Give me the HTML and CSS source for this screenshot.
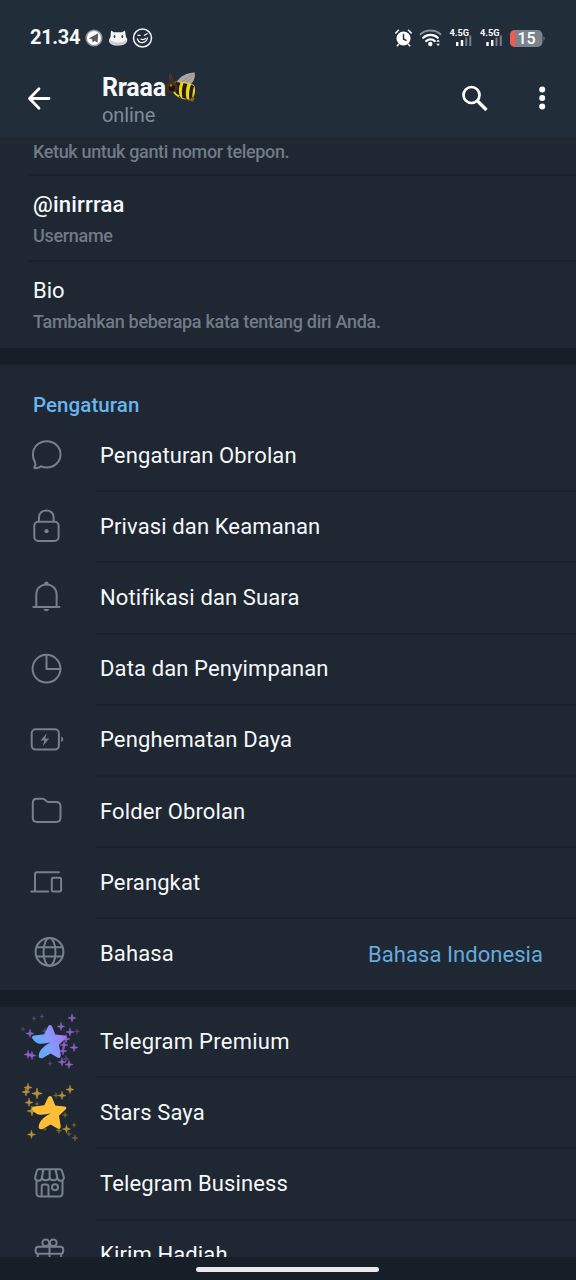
FILE: index.html
```html
<!DOCTYPE html>
<html lang="id">
<head>
<meta charset="utf-8">
<title>Pengaturan</title>
<link rel="stylesheet" href="styles.css">
</head>
<body>
<div class="screen">
  <header class="header">
    <div class="status">
      <span class="clock">21.34</span>
      <svg class="notif" width="70" height="22" viewBox="0 0 70 22">
        <circle cx="9" cy="11" r="8.6" fill="#8e959d"/><circle cx="9" cy="11" r="7" fill="#fff"/>
        <path d="M3.600 11.400 13.200 6.200l-.6 9.400-3.200-1.800-1.700 2-.6-3.600z" fill="#555c63"/>
        <path d="M26 3.500 29 5.200h8L40 3.500l1 6.500c3 3 1 8.600-8 8.600s-10.500-4.600-7.500-8.600z" fill="#f3f4f5"/>
        <path d="M24.600 12.500c-1 7.500 17.800 7.500 17.200 0-3 4-14 4-17.200 0z" fill="#c9cdd1"/>
        <ellipse cx="29.500" cy="9.500" rx=".9" ry="1.500" fill="#303943"/><ellipse cx="37.300" cy="9.500" rx=".9" ry="1.500" fill="#303943"/>
        <g fill="none" stroke="#f1f3f5" stroke-width="1.500" stroke-linecap="round"><circle cx="57.500" cy="11" r="9"/><path d="M52.500 12c1.200 5.200 8.500 4.600 10-1M53 8.300h2M59.500 8.300l2.700-1.600M56 12.200c1.600.7 3.200.3 4.500-.7" stroke-width="1.300"/></g>
      </svg>
      <svg class="indicators" width="156" height="24" viewBox="0 0 156 24">
        <g fill="none" stroke="#fff" stroke-linecap="round">
          <circle cx="13.500" cy="12.500" r="7" fill="#fff" stroke="none"/>
          <path d="M13.500 8.500v4.500l2.600 1.300" stroke="#222d3a" stroke-width="1.500"/>
          <path d="M5.800 7 8.500 4.300M18.500 4.300 21.200 7M8.500 18.500 7.300 19.700M18.500 18.500l1.200 1.200" stroke-width="1.600"/>
          <path d="M30.500 8.200c5.500-5 14.500-5 20 0" stroke="#89919a" stroke-width="2"/>
          <path d="M33.200 11.800c4-3.900 10.600-3.900 14.600 0M36.200 15.100c2.400-2.300 6.200-2.300 8.600 0" stroke-width="2.200"/>
        </g>
        <circle cx="40.300" cy="18" r="2.200" fill="#fff"/><path d="m46.300 15.800 1.800-2.300 1.800 2.300zm0 1.900h3.600l-1.800 2.300z" fill="#fff"/>
        <g class="network"><text x="59.500" y="10" textLength="19.500" lengthAdjust="spacingAndGlyphs">4.5G</text><text x="90" y="10" textLength="19.500" lengthAdjust="spacingAndGlyphs">4.5G</text></g>
        <g fill="#fff"><path d="M66 16h2.400v4H66zM70.800 14h2.400v6h-2.400zM96.300 16h2.400v4h-2.400zM101 14h2.400v6H101z"/></g>
        <path d="M75.300 11.500h2V20h-2zM79.300 9.500h2V20h-2zM105.500 11.500h2V20h-2zM109.800 9.500h2V20h-2z" fill="#77808a"/>
        <rect x="120" y="4" width="32.500" height="17" rx="5" fill="#7b838c"/>
        <path d="M125.500 4H125a5 5 0 0 0-5 5v7a5 5 0 0 0 5 5h.5z" fill="#ed5b55"/>
        <path d="M153.500 10q2.300 2.500 0 5z" fill="#7b838c"/>
        <text class="charge" x="136.500" y="18.200" text-anchor="middle">15</text>
      </svg>
    </div>
    <div class="toolbar">
      <svg class="back" width="24" height="26" viewBox="0 0 24 26"><path d="M22 13.500H2.500M12 3.800 2.500 13.500l9.500 9.700" fill="none" stroke="#fff" stroke-width="2.800" stroke-linecap="round" stroke-linejoin="round"/></svg>
      <div class="profile">
        <div class="name"><span>Rraaa</span>
          <svg class="bee" width="32" height="32" viewBox="0 0 32 32">
            <path d="M10 11C14 4 21 .5 28.500.5 30 5 27 12 22 14z" fill="#aaa6a5"/><path d="M14 11 27 2M18 12l9-7" stroke="#8d8a8c" stroke-width=".8"/>
            <path d="M7 10c7-1 16 0 21 3 2 5 1 10-2 14.500-8 1-16-2-19-7.500z" fill="#f2d416"/>
            <path d="M9.500 10c4 0 5 1 5 1-2 4-2 8-1 12.500-3-1-4-3-4-3-1-4-1-7 0-10.500zM17.500 11l4 1c-2 5-2 9-1 15l-4-1c-1-5-1-10 1-15zM25 12.500l3 1.500c-1.500 5-1.500 9-2 13.500l-2.500.3c-1-4-.5-10.300 1.500-15.300z" fill="#211d19"/>
            <circle cx="6" cy="15" r="5.700" fill="#483319"/><circle cx="6" cy="16" r="3.200" fill="#171512"/><circle cx="5" cy="13.500" r="1.200" fill="#a77a27"/>
            <path d="M5 9Q3 6 4 2.500M7 9Q6 5 4.500 2.500M13 24l2 2.500M20 27l3 2" fill="none" stroke="#5a3430" stroke-width="1.300"/>
            <path d="m26 25 3 1-2 3.500-4-1z" fill="#8d5d1c"/>
          </svg>
        </div>
        <div class="presence">online</div>
      </div>
      <svg class="search" width="28" height="28" viewBox="0 0 28 28" fill="none" stroke="#fff"><circle cx="10.500" cy="10" r="8" stroke-width="2.700"/><path d="m16.500 16 9 9" stroke-width="3.300"/></svg>
      <svg class="more" width="8" height="26" viewBox="0 0 8 26" fill="#fff"><circle cx="4.200" cy="4.500" r="3"/><circle cx="4.200" cy="13" r="3"/><circle cx="4.200" cy="21.500" r="3"/></svg>
    </div>
  </header>

  <main class="content">
    <section class="account">
      <div class="field phone"><span class="hint">Ketuk untuk ganti nomor telepon.</span></div>
      <div class="field"><span class="value handle">@inirrraa</span><span class="hint">Username</span></div>
      <div class="field"><span class="value">Bio</span><span class="hint">Tambahkan beberapa kata tentang diri Anda.</span></div>
    </section>

    <section class="settings">
      <h2 class="heading">Pengaturan</h2>
      <div class="row">
        <svg class="icon" viewBox="0 0 96 71"><path d="M46.800 21.200c7.700 0 13.700 5.800 13.700 13.200s-6 13-13.700 13c-2.200 0-4-.4-5.600-1.100-1.900 1.300-4 1.800-6 1.900-.9 0-1.200-.7-.7-1.300 1.200-1.600 1.300-3.100.5-4.600-1.400-2.400-2.100-5.100-2.100-7.900 0-7.400 6.200-13.200 13.900-13.200z"/></svg>
        <span class="label">Pengaturan Obrolan</span>
      </div>
      <div class="row">
        <svg class="icon" viewBox="0 0 96 71"><rect x="34.300" y="30.700" width="24.300" height="19.300" rx="4"/><path d="M39 30.500v-4.300c0-9 14.600-9 14.600 0v4.300"/><circle class="solid" cx="46.500" cy="40.200" r="2.100"/></svg>
        <span class="label">Privasi dan Keamanan</span>
      </div>
      <div class="row">
        <svg class="icon" viewBox="0 0 96 71"><path d="M33.300 45h26.200M36.300 44.500V32.700c0-13.500 20.300-13.500 20.300 0v11.800"/><path class="solid" d="M43.500 47h5.500c-.7 3-4.800 3-5.500 0zM44 22.800c0-4.400 4.800-4.400 4.800 0z"/></svg>
        <span class="label">Notifikasi dan Suara</span>
      </div>
      <div class="row">
        <svg class="icon" viewBox="0 0 96 71"><circle cx="46.500" cy="34.700" r="13.900"/><path d="M46.500 21v14h13.800"/></svg>
        <span class="label">Data dan Penyimpanan</span>
      </div>
      <div class="row">
        <svg class="icon" viewBox="0 0 96 71"><rect x="31.700" y="24.200" width="27.200" height="20.400" rx="4"/><path class="solid" d="m46.800 28-6.200 7.600h3.700l-1.500 5.700 6.400-7.900h-3.900zM61.200 31.500c2.700 1 2.700 4.800 0 5.800z"/></svg>
        <span class="label">Penghematan Daya</span>
      </div>
      <div class="row">
        <svg class="icon" viewBox="0 0 96 71"><path d="M36.800 22.800h5.800c3 0 3 3.200 6 3.200H56c3 0 4.500 1.600 4.500 4.300v11.400c0 2.700-1.500 4.200-4.300 4.200H37c-2.700 0-4.200-1.500-4.200-4.200V27c0-2.700 1.300-4.200 4-4.200z"/></svg>
        <span class="label">Folder Obrolan</span>
      </div>
      <div class="row">
        <svg class="icon" viewBox="0 0 96 71"><path d="M59 25.300H37.200q-2.200 0-2.200 2.200v17M31.300 44.500h17"/><rect x="51.800" y="30.800" width="9.300" height="13.700" rx="1.500"/></svg>
        <span class="label">Perangkat</span>
      </div>
      <div class="row">
        <svg class="icon" viewBox="0 0 96 71"><circle cx="49.500" cy="33.900" r="13.900"/><ellipse cx="49.500" cy="33.900" rx="6" ry="13.900"/><path d="M37.500 29.200h24M37.500 38.600h24"/></svg>
        <span class="label language">Bahasa</span><span class="current">Bahasa Indonesia</span>
      </div>
    </section>

    <section class="extras">
      <div class="row">
        <svg class="icon art" viewBox="0 0 96 71">
          <defs><linearGradient id="premium" x1="0" y1=".7" x2="1" y2=".3"><stop stop-color="#55afff"/><stop offset=".5" stop-color="#819cff"/><stop offset="1" stop-color="#aa72ef"/></linearGradient>
          <path id="star" d="M50 19c1.200 0 1.900.9 2.400 2.200l2.900 7.300 9.300.9c2 .3 2.300 1.900.9 3.200l-6.500 6.100 1.700 10.400c.3 2.500-1.400 3.500-3.300 2.400l-6.800-4.100-7.300 4.300c-2.900 1.600-5.300 0-4.600-2.700 1.200-5.300 5.800-9.800 12.300-12.400-5 .2-8.900 2.300-13.400.6-2.300-.9-4-2.600-5.200-4.600-.9-1.800-.1-2.900 1.900-3.200l10-1.100 3.400-7.300c.6-1.300 1.200-2 2.300-2z"/>
          <path id="spark" d="M0-4 .9-.9 4 0 .9.900 0 4-.9.900-4 0-.9-.9z"/></defs>
          <g fill="#8c60c3" stroke="#8c60c3" stroke-width=".5">
            <use href="#spark" x="72" y="12"/><use href="#spark" x="30" y="27.500"/><use href="#spark" x="70" y="26"/><use href="#spark" x="74" y="41.500"/><use href="#spark" x="28" y="48.500"/><use href="#spark" x="32" y="49.500"/><use href="#spark" x="62" y="56"/><use href="#spark" x="69" y="58.500"/><use href="#spark" x="61" y="20.500"/><use href="#spark" x="66" y="33"/><use href="#spark" x="64" y="39"/><use href="#spark" x="63" y="45"/>
            <g opacity=".55"><use href="#spark" transform="translate(34 12.500) scale(.6)"/><use href="#spark" transform="translate(42 10.500) scale(.6)"/><use href="#spark" transform="translate(23 23) scale(.6)"/><use href="#spark" transform="translate(77 25.500) scale(.7)"/><use href="#spark" transform="translate(50 57.500) scale(.6)"/><use href="#spark" transform="translate(45 25) scale(.8)"/><use href="#spark" transform="translate(66 53) scale(.8)"/></g>
          </g>
          <use href="#star" fill="url(#premium)"/>
        </svg>
        <span class="label premium">Telegram Premium</span>
      </div>
      <div class="row">
        <svg class="icon art" viewBox="0 0 96 71">
          <g fill="#b6913c" stroke="#b6913c" stroke-width=".5">
            <use href="#spark" x="28" y="10.500"/><use href="#spark" x="26" y="15"/><use href="#spark" transform="translate(37 16.500) scale(1.300)"/><use href="#spark" x="29" y="25.500"/><use href="#spark" transform="translate(32 34) scale(1.200)"/><use href="#spark" x="70" y="12.500"/><use href="#spark" x="62" y="18.500"/><use href="#spark" x="31.500" y="57.500"/><use href="#spark" x="66.500" y="52"/>
            <g opacity=".6"><use href="#spark" transform="translate(56 18.500) scale(.7)"/><use href="#spark" transform="translate(37 27) scale(.6)"/><use href="#spark" transform="translate(65 38) scale(.7)"/><use href="#spark" transform="translate(45 52) scale(.5)"/><use href="#spark" transform="translate(59 53.500) scale(.8)"/><use href="#spark" transform="translate(74 48) scale(.6)"/><use href="#spark" transform="translate(69 57) scale(.6)"/><use href="#spark" transform="translate(75 61) scale(.8)"/></g>
          </g>
          <use href="#star" fill="#fdbd37"/>
        </svg>
        <span class="label">Stars Saya</span>
      </div>
      <div class="row">
        <svg class="icon" viewBox="0 0 96 71"><path d="M38.700 21.300h21q1.800 0 2.300 1.700l1.900 6.500c.6 4.200-6.600 4.200-6.600 0 0 3.500-7.600 3.500-7.600 0 0 3.500-7.700 3.500-7.700 0 0 4.200-7.400 4.200-6.900 0l1.700-6.500q.5-1.700 1.900-1.700zM43.300 21.500 42 29.300M49.600 21.500v8M55.600 21.500l1.600 7.800M36.500 32.500v12.200q0 3.800 3.500 3.800h19q3.500 0 3.500-3.800V32.500M41.700 48.300V38.500q0-2 2-2h2.800q2 0 2 2v9.800"/><circle cx="55" cy="39.200" r="3"/></svg>
        <span class="label">Telegram Business</span>
      </div>
      <div class="row">
        <svg class="icon" viewBox="0 0 96 71"><circle cx="45.700" cy="22.800" r="3.400"/><circle cx="53.300" cy="22.800" r="3.400"/><rect x="35.700" y="26.700" width="27.500" height="7" rx="2.500"/><path d="M49.500 24.500v26M37.800 34V46.500q0 4 4 4h15.400q4 0 4-4V34"/></svg>
        <span class="label">Kirim Hadiah</span>
      </div>
    </section>
  </main>
  <footer class="navbar"><div class="handlebar"></div></footer>
</div>
</body>
</html>
```
FILE: styles.css
```css
* { box-sizing: border-box; }
body { margin: 0; background: #1e2732; font-family: Roboto, sans-serif; color: #f6f8fa; }
svg { display: block; flex: none; }
.screen { width: 576px; height: 1280px; display: grid; grid-template-rows: 137px 1120px 23px; overflow: hidden; }
.header { background: #222d3a; }
.status { height: 72px; padding: 26px 30px 0; display: flex; align-items: flex-start; }
.clock { width: 55px; font-size: 20px; line-height: 23px; font-weight: 700; letter-spacing: -.3px; }
.notif { margin-top: 1px; }
.indicators { margin-left: 235px; }
.network { fill: #fff; font: 700 9.500px Roboto, sans-serif; }
.charge { fill: #fff; font: 500 16px Roboto, sans-serif; }
.toolbar { height: 65px; padding-left: 27px; display: flex; align-items: flex-start; }
.back { margin-top: 13px; }
.profile { width: 410px; padding-left: 51px; }
.name { height: 31px; display: flex; align-items: center; font-size: 25px; font-weight: 700; }
.name span { width: 64px; letter-spacing: -.2px; }
.presence { font-size: 20px; line-height: 24px; letter-spacing: -.1px; color: #7e8b98; }
.search { margin-top: 13px; }
.more { margin: 13px 0 0 49px; }
.content { overflow: hidden; background: #1e2732; }
.account { height: 211px; display: grid; grid-template-rows: 39px 86px 86px; }
.field { margin-left: 28px; padding: 15px 0 0 5px; display: flex; flex-direction: column; gap: 6px; border-bottom: 2px solid #19222c; }
.field:last-child { border: 0; }
.phone { padding-top: 4px; }
.value { font-size: 22px; line-height: 28px; }
.handle { font-weight: 500; letter-spacing: .2px; }
.hint { font-size: 18px; line-height: 22px; font-weight: 500; letter-spacing: -.3px; color: #707b85; }
.phone .hint { letter-spacing: -.36px; }
.settings { height: 642px; padding-top: 28px; border-top: 17px solid #161f28; }
.heading { height: 28px; margin: 0; padding-left: 33px; font-size: 20.500px; line-height: 24px; font-weight: 500; letter-spacing: .08px; color: #69b5ee; }
.row { height: 71.200px; padding-bottom: 2px; display: flex; align-items: center; background: linear-gradient(#19222c, #19222c) 96px 100% / 480px 2px no-repeat; }
.settings .row:last-child { background: none; }
.icon { width: 96px; height: 71px; fill: none; stroke: #75818d; stroke-width: 2; stroke-linecap: round; stroke-linejoin: round; }
.icon .solid { fill: #75818d; stroke: none; }
.art { stroke: none; }
.label { margin-left: 4px; font-size: 22px; line-height: 28px; letter-spacing: .12px; white-space: nowrap; }
.premium { letter-spacing: .25px; }
.current { margin: 2px 33px 0 auto; font-size: 22px; letter-spacing: .05px; color: #64aadd; }
.extras { border-top: 17px solid #161f28; }
.navbar { padding: 10px 0 0 196px; background: #161f28; }
.handlebar { width: 183px; height: 5px; border-radius: 3px; background: #e9e9ed; }
```
